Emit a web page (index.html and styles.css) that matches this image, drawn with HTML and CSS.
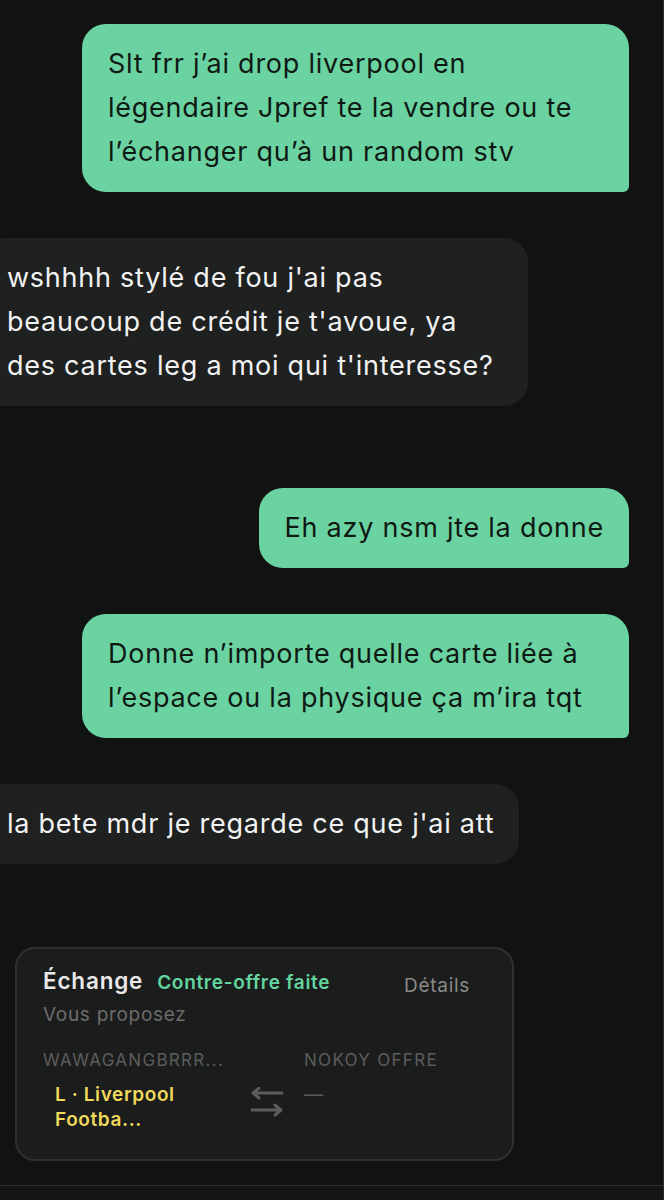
FILE: index.html
```html
<!DOCTYPE html>
<html lang="fr">
<head>
  <meta charset="UTF-8">
  <title>Messages</title>
  <link rel="stylesheet" href="styles.css">
</head>
<body>
  <div class="app">
    <!-- fil de discussion -->
    <div class="thread">
      <div class="msg sent">Slt frr j’ai drop liverpool en légendaire Jpref te la vendre ou te l’échanger qu’à un random stv</div>
      <div class="msg recv">wshhhh stylé de fou j'ai pas beaucoup de crédit je t'avoue, ya des cartes leg a moi qui t'interesse?</div>

      <div class="msg sent new-group">Eh azy nsm jte la donne</div>
      <div class="msg sent">Donne n’importe quelle carte liée à l’espace ou la physique ça m’ira tqt</div>
      <div class="msg recv">la bete mdr je regarde ce que j'ai att</div>

      <!-- carte d'échange -->
      <div class="trade-card">
        <div class="trade-head">
          <span class="trade-title">Échange</span>
          <span class="trade-status">Contre-offre faite</span>
          <span class="trade-details">Détails</span>
        </div>
        <div class="trade-sub">Vous proposez</div>
        <div class="trade-grid">
          <div class="trade-label">WAWAGANGBRRR...</div>
          <div></div>
          <div class="trade-label">NOKOY OFFRE</div>

          <div class="trade-item">L · Liverpool Footba...</div>
          <svg class="trade-swap" width="34" height="32" viewBox="0 0 34 32" fill="none" stroke="#5b5c5c" stroke-width="3" stroke-linecap="round" stroke-linejoin="round">
            <path d="M32 6H3M9 1L3 6l6 5"/>
            <path d="M2 23h29M25 18l6 5-6 5"/>
          </svg>
          <div class="trade-empty">—</div>
        </div>
      </div>
    </div>

    <div class="composer"></div>
  </div>
</body>
</html>
```

FILE: styles.css
```css
html, body {
  margin: 0;
  padding: 0;
  background-color: #111312;
  overflow: hidden;
}
body {
  font-family: Inter, "Noto Sans", "Liberation Sans", sans-serif;
}
.app {
  width: 663px;
  height: 1200px;
  border-right: 1px solid #2a2c2b;
  display: flex;
  flex-direction: column;
}
.thread {
  flex: 1;
  overflow: hidden;
  display: flex;
  flex-direction: column;
  gap: 46px;
  padding: 24px 34px 0 0;
  margin-left: -19px;
}
.msg {
  max-width: 547px;
  box-sizing: border-box;
  padding: 18px 25px 18px 26px;
  font-size: 27px;
  line-height: 44px;
  letter-spacing: 0.75px;
  border-radius: 24px;
}
.sent {
  align-self: flex-end;
  background-color: #6bd3a1;
  color: #0f1914;
  border-bottom-right-radius: 6px;
}
.recv {
  align-self: flex-start;
  background-color: #1f2020;
  color: #f2f2f2;
  border-bottom-left-radius: 6px;
}
.new-group {
  margin-top: 36px;
}
.trade-card {
  align-self: flex-start;
  margin: 37px 0 0 34px;
  width: 499px;
  box-sizing: border-box;
  padding: 17px 42px 27px 26px;
  background-color: #1b1c1c;
  border: 2px solid #2f3030;
  border-radius: 20px;
}
.trade-head {
  display: flex;
  align-items: baseline;
}
.trade-title {
  font-size: 22.5px;
  font-weight: 600;
  letter-spacing: 0.8px;
  color: #e9e9e9;
  line-height: 30px;
}
.trade-status {
  margin-left: 14px;
  font-size: 19px;
  font-weight: 600;
  letter-spacing: 0.7px;
  color: #63d69f;
}
.trade-details {
  margin-left: auto;
  font-size: 19px;
  letter-spacing: 0.7px;
  color: #8a8a8a;
  position: relative;
  top: 3px;
}
.trade-sub {
  margin-top: 7px;
  font-size: 19px;
  line-height: 24px;
  letter-spacing: 0.7px;
  color: #6c6c6c;
}
.trade-grid {
  margin-top: 22px;
  display: grid;
  grid-template-columns: 187px 34px 1fr;
  column-gap: 20px;
  row-gap: 11px;
}
.trade-label {
  font-size: 17px;
  line-height: 22px;
  letter-spacing: 1.3px;
  color: #5c5d5d;
  text-transform: uppercase;
  white-space: nowrap;
}
.trade-item {
  padding-left: 12px;
  font-size: 19px;
  font-weight: 600;
  line-height: 25px;
  letter-spacing: 0.6px;
  color: #f0d95a;
}
.trade-swap {
  margin-top: 5px;
}
.trade-empty {
  font-size: 19px;
  line-height: 25px;
  color: #5a5b5b;
}
.composer {
  height: 14px;
  border-top: 1px solid #2f3030;
  background-color: #141615;
}
```
